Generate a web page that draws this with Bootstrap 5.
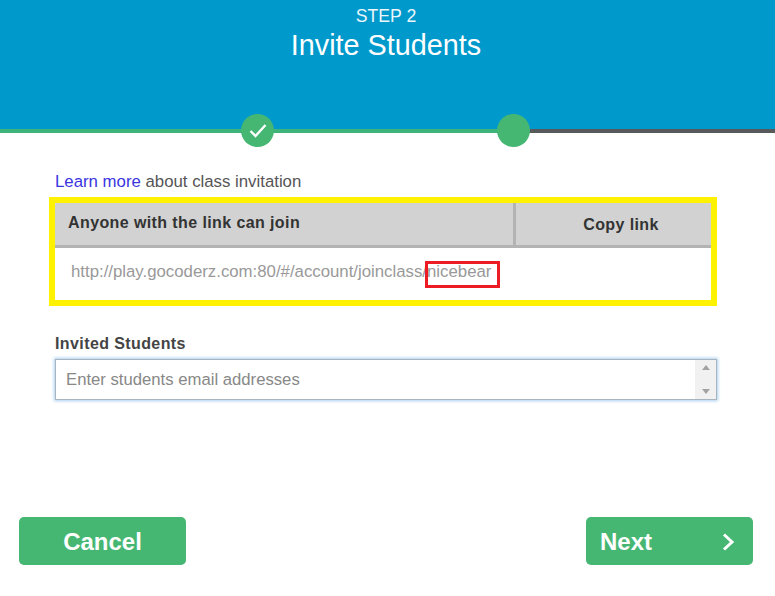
<!DOCTYPE html>
<html lang="en">
<head>
<meta charset="utf-8">
<title>Invite Students</title>
<link href="https://cdn.jsdelivr.net/npm/bootstrap@5.3.0/dist/css/bootstrap.min.css" rel="stylesheet">
<style>
html,body{height:596px;overflow:hidden;background:#fff;font-family:"Liberation Sans",Arial,sans-serif;}
.hero{height:129px;background:#0099cc;color:#fff;padding:6px 3px 0 0;}
.hero-step{font-size:19px;line-height:20px;transform:scaleX(.93);opacity:.92;}
.hero-title{font-size:28.8px;line-height:38px;font-weight:400;margin:0;}
.track{height:4px;position:relative;background:linear-gradient(to right,#3fb47a 0,#3fb47a 514px,#58595b 514px);}
.dot{position:absolute;top:-15px;width:33px;height:33px;border-radius:50%;background:#46b773;}
.dot-one{left:241px;}
.dot-two{left:497px;}
.main-area{padding:0 58px 0 55px;}
.learn{font-size:16.8px;line-height:18px;color:#555;margin-top:40px;}
.learn a{color:#3a35e0;text-decoration:none;}
.linkbox{width:668px;height:109px;margin:6px 0 0 -6px;border:6px solid #fff200;background:#fff;}
.linkhead{height:45px;background:#d2d2d2;border-bottom:3px solid #b3b3b3;color:#333;font-weight:700;font-size:16px;letter-spacing:.4px;}
.linkhead-left{width:461px;padding:0 0 2px 13px;border-right:3px solid #b3b3b3;}
.linkhead-right{padding:1px 0 0 15px;}
.linkurl{height:50px;padding:0 0 3px 16px;color:#999;font-size:16.8px;position:relative;}
.redmark{position:absolute;left:370px;top:13px;width:75px;height:27px;border:3px solid #ed1c24;}
.invite-label{font-size:16px;font-weight:700;color:#444;letter-spacing:.4px;line-height:18px;margin:29px 0 6px;}
.invite-box{width:662px;height:41px;border:1px solid #a9b4bd;box-shadow:0 0 3px 1px #a9cfee;background:#fff;}
.invite-box input{border:0;outline:0;flex:1;min-width:0;padding:0 10px;font-size:16.7px;color:#555;background:transparent;}
.invite-box input::placeholder{color:#888;opacity:1;}
.spin{width:21px;background:#f1f1f1;padding:5px 0;}
.arr-up,.arr-down{width:0;height:0;border-left:4px solid transparent;border-right:4px solid transparent;}
.arr-up{border-bottom:5px solid #a3a3a3;}
.arr-down{border-top:5px solid #a3a3a3;}
.foot{position:absolute;left:19px;right:22px;top:517px;}
.btn-go{width:167px;height:48px;background:#46b773;border:0;border-radius:5px;color:#fff;font-weight:700;font-size:24px;padding:1px 0 0;}
.btn-go:hover{background:#46b773;color:#fff;}
.btn-next{padding:1px 18px 0 14px;}
</style>
</head>
<body>
<header class="hero text-center">
  <div class="hero-step">STEP 2</div>
  <h1 class="hero-title">Invite Students</h1>
</header>
<div class="track">
  <span class="dot dot-one d-flex align-items-center justify-content-center">
    <svg width="20" height="17" viewBox="0 0 20 17" aria-hidden="true"><path d="M2.5 9 L7.5 14 L17.5 3" fill="none" stroke="#fff" stroke-width="2.4"/></svg>
  </span>
  <span class="dot dot-two"></span>
</div>
<main class="main-area">
  <p class="learn mb-0"><a href="#">Learn more</a> about class invitation</p>
  <div class="linkbox">
    <div class="linkhead d-flex align-items-center">
      <div class="linkhead-left h-100 d-flex align-items-center">Anyone with the link can join</div>
      <div class="linkhead-right flex-grow-1 text-center">Copy link</div>
    </div>
    <div class="linkurl d-flex align-items-center">http://play.gocoderz.com:80/#/account/joinclass/nicebear<span class="redmark"></span></div>
  </div>
  <div class="invite-label">Invited Students</div>
  <div class="invite-box d-flex">
    <input type="text" placeholder="Enter students email addresses" aria-label="Invited Students">
    <div class="spin d-flex flex-column align-items-center justify-content-between">
      <span class="arr-up"></span>
      <span class="arr-down"></span>
    </div>
  </div>
</main>
<footer class="foot d-flex justify-content-between">
  <button type="button" class="btn btn-go">Cancel</button>
  <button type="button" class="btn btn-go btn-next d-flex align-items-center justify-content-between">Next
    <svg width="14" height="20" viewBox="0 0 14 20" aria-hidden="true"><path d="M3 2.5 L11 10 L3 17.5" fill="none" stroke="#fff" stroke-width="3"/></svg>
  </button>
</footer>
</body>
</html>
